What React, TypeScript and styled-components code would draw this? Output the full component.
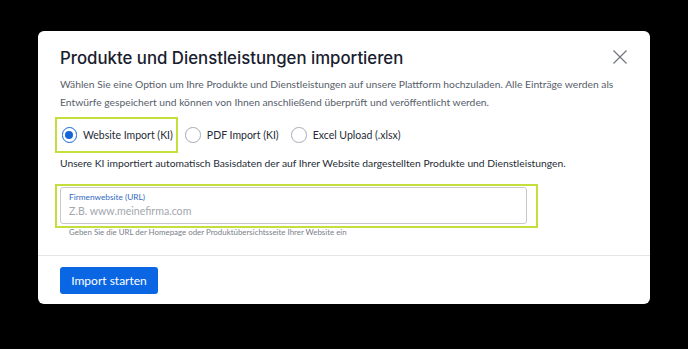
import * as React from 'react';
import styled, { createGlobalStyle } from 'styled-components';

const GlobalStyle = createGlobalStyle`
  html, body {
    margin: 0;
    padding: 0;
    background: #000;
  }
  * {
    box-sizing: border-box;
  }
`;

const BODY_FONT = `Lato, "Noto Sans", sans-serif`;
const ACCENT = '#1466d8';
const HIGHLIGHT = '#c4de3c';

const Backdrop = styled.div`
  width: 688px;
  height: 349px;
  padding: 31px 38px 0;
  background: #000;
`;

const Modal = styled.div`
  width: 612px;
  height: 273px;
  background: #fff;
  border-radius: 6px;
  display: flex;
  flex-direction: column;
  font-family: ${BODY_FONT};
`;

const Content = styled.div`
  padding: 16px 22px 0;
  display: flex;
  flex-direction: column;
`;

const Header = styled.div`
  display: flex;
  align-items: flex-start;
  justify-content: space-between;
`;

const Title = styled.h2`
  margin: 0;
  font-family: Inter, sans-serif;
  font-weight: 500;
  font-size: 16.8px;
  line-height: 22px;
  color: #18202e;
`;

const CloseButton = styled.button`
  border: 0;
  background: none;
  padding: 0;
  margin: 2px 0 0 0;
  width: 16px;
  height: 16px;
  cursor: pointer;
  color: #6f747c;
`;

const Intro = styled.p`
  margin: 6px 0 0;
  font-size: 10.3px;
  line-height: 18px;
  color: #575e6a;
`;

const OptionRow = styled.div`
  display: flex;
  align-items: center;
  gap: 1px;
  margin-top: 6px;
  margin-left: -5px;
`;

const Option = styled.label<{ $highlight?: boolean }>`
  display: flex;
  align-items: center;
  gap: 6px;
  height: 36px;
  padding: 0 3px 0 4.5px;
  border: 2px solid ${(p) => (p.$highlight ? HIGHLIGHT : 'transparent')};
  font-size: 10.5px;
  color: #262c36;
  cursor: pointer;
`;

const RadioCircle = styled.span<{ $checked?: boolean }>`
  width: 15.5px;
  height: 15.5px;
  border-radius: 50%;
  border: 1px solid ${(p) => (p.$checked ? ACCENT : '#a8adb4')};
  display: flex;
  align-items: center;
  justify-content: center;
  &::after {
    content: '';
    width: 8px;
    height: 8px;
    border-radius: 50%;
    background: ${(p) => (p.$checked ? ACCENT : 'transparent')};
  }
`;

const Description = styled.p`
  margin: 1px 0 0;
  font-size: 10.3px;
  line-height: 18px;
  color: #262c36;
`;

const FieldHighlight = styled.div`
  margin: 12px 0 0 -5px;
  width: 483px;
  height: 44px;
  border: 2px solid ${HIGHLIGHT};
  padding: 1px 9px 2px 3px;
`;

const InputBox = styled.div`
  height: 37px;
  border: 1px solid #c6cad0;
  border-radius: 3px;
  padding: 3.5px 8px 0;
  display: flex;
  flex-direction: column;
`;

const FieldLabel = styled.label`
  font-size: 8.3px;
  line-height: 10px;
  color: #2f6bc2;
`;

const Input = styled.input`
  border: 0;
  outline: none;
  padding: 0;
  margin-top: 2.6px;
  font-family: ${BODY_FONT};
  font-size: 10.6px;
  line-height: 14px;
  height: 14px;
  color: #2b313b;
  background: transparent;
  &::placeholder {
    color: #a3a7ad;
  }
`;

const Helper = styled.div`
  margin: 0 0 0 9px;
  font-size: 7.9px;
  line-height: 8px;
  color: #7b8088;
`;

const Footer = styled.div`
  margin-top: auto;
  border-top: 1px solid #e3e5e9;
  padding: 11px 22px 10px;
`;

const PrimaryButton = styled.button`
  display: block;
  height: 27.5px;
  width: 98px;
  padding: 0;
  border: 0;
  border-radius: 3px;
  background: #0b66e4;
  color: #fff;
  font-family: ${BODY_FONT};
  font-size: 12px;
  cursor: pointer;
`;

const options = [
  { id: 'web', label: 'Website Import (KI)' },
  { id: 'pdf', label: 'PDF Import (KI)' },
  { id: 'xlsx', label: 'Excel Upload (.xlsx)' },
];

export default function App() {
  const [selected, setSelected] = React.useState('web');

  return (
    <>
      <GlobalStyle />
      <Backdrop>
        <Modal>
          <Content>
            <Header>
              <Title>Produkte und Dienstleistungen importieren</Title>
              <CloseButton aria-label="Schließen">
                <svg width="16" height="16" viewBox="0 0 16 16" fill="none">
                  <path d="M1.5 1.5L14.5 14.5M14.5 1.5L1.5 14.5" stroke="currentColor" strokeWidth="1.2" />
                </svg>
              </CloseButton>
            </Header>
            <Intro>
              Wählen Sie eine Option um Ihre Produkte und Dienstleistungen auf unsere Plattform hochzuladen. Alle
              Einträge werden als Entwürfe gespeichert und können von Ihnen anschließend überprüft und veröffentlicht
              werden.
            </Intro>
            <OptionRow>
              {options.map((o) => (
                <Option key={o.id} $highlight={o.id === 'web'} onClick={() => setSelected(o.id)}>
                  <RadioCircle $checked={selected === o.id} />
                  {o.label}
                </Option>
              ))}
            </OptionRow>
            <Description>
              Unsere KI importiert automatisch Basisdaten der auf Ihrer Website dargestellten Produkte und
              Dienstleistungen.
            </Description>
            <FieldHighlight>
              <InputBox>
                <FieldLabel htmlFor="url">Firmenwebsite (URL)</FieldLabel>
                <Input id="url" placeholder="Z.B. www.meinefirma.com" />
              </InputBox>
            </FieldHighlight>
            <Helper>Geben Sie die URL der Homepage oder Produktübersichtsseite Ihrer Website ein</Helper>
          </Content>
          <Footer>
            <PrimaryButton>Import starten</PrimaryButton>
          </Footer>
        </Modal>
      </Backdrop>
    </>
  );
}
